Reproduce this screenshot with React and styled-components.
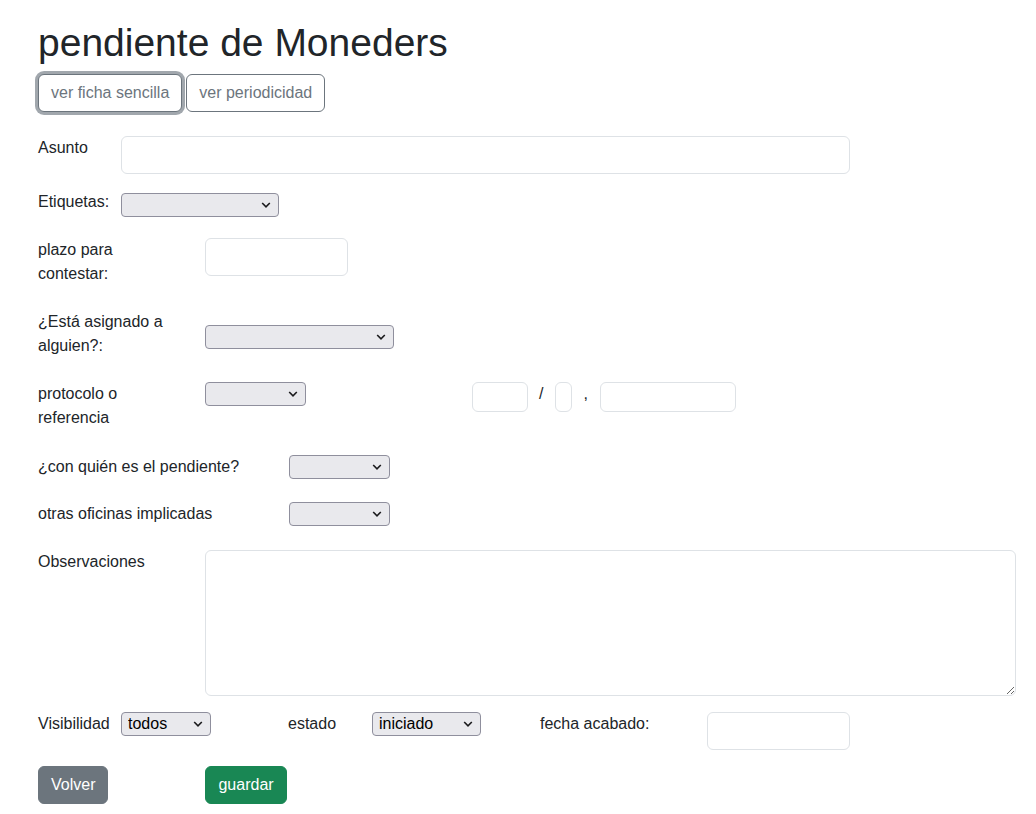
import React from 'react';
import styled, { createGlobalStyle } from 'styled-components';

const GlobalStyle = createGlobalStyle`
  * { box-sizing: border-box; }
  body {
    margin: 0;
    font-family: "Liberation Sans", Arial, sans-serif;
    font-size: 16px;
    line-height: 1.5;
    color: #212529;
    background: #fff;
  }
`;

const Page = styled.div`
  padding: 0 20px 0 38px;
`;

const Title = styled.h1`
  margin: 20px 0 7px;
  font-size: 39px;
  font-weight: 400;
  line-height: 1.2;
`;

const TabBar = styled.div`
  display: flex;
  gap: 4px;
`;

const OutlineButton = styled.button`
  font: inherit;
  height: 38px;
  padding: 6px 12px;
  color: #6c757d;
  background: #fff;
  border: 1px solid #6c757d;
  border-radius: 6px;
  box-shadow: ${(p) => (p.$focus ? '0 0 0 3px rgba(130, 138, 145, 0.75)' : 'none')};
`;

const Form = styled.form`
  padding-top: 23px;
`;

const Row = styled.div`
  display: flex;
  align-items: flex-start;
  margin-top: ${(p) => p.$top || 0}px;
`;

const Label = styled.label`
  flex: none;
  width: ${(p) => p.$w}px;
  padding: 1px 24px 0 0;
  margin-left: ${(p) => p.$ml || 0}px;
`;

const TextInput = styled.input`
  flex: none;
  font: inherit;
  width: ${(p) => p.$w}px;
  height: ${(p) => p.$h || 38}px;
  margin-top: 1px;
  margin-left: ${(p) => p.$ml || 0}px;
  border: 1px solid #dee2e6;
  border-radius: 6px;
  background: #fff;
`;

const TextArea = styled.textarea`
  flex: none;
  font: inherit;
  width: 811px;
  height: 146px;
  margin-top: 1px;
  border: 1px solid #dee2e6;
  border-radius: 6px;
  background: #fff;
`;

const SelectWrap = styled.div`
  position: relative;
  flex: none;
  width: ${(p) => p.$w}px;
  height: 24px;
  margin-top: ${(p) => (p.$mt === undefined ? 1 : p.$mt)}px;

  svg {
    position: absolute;
    right: 8px;
    top: 9px;
    pointer-events: none;
  }
`;

const NativeSelect = styled.select`
  appearance: none;
  width: 100%;
  height: 24px;
  padding: 0 20px 0 6px;
  font-family: "Liberation Sans", Arial, sans-serif;
  font-size: 16px;
  line-height: 22px;
  color: #000;
  background: #e9e9ed;
  border: 1px solid #8f8f9d;
  border-radius: 4px;
`;

const Sep = styled.span`
  flex: none;
  margin: 1px 12px 0 11px;
`;

const SolidButton = styled.button`
  font: inherit;
  height: 38px;
  padding: 6px 12px;
  color: #fff;
  background: ${(p) => p.$bg};
  border: 1px solid ${(p) => p.$bg};
  border-radius: 6px;
  margin-left: ${(p) => p.$ml || 0}px;
`;

function Select({ w, mt, value }) {
  return (
    <SelectWrap $w={w} $mt={mt}>
      <NativeSelect defaultValue={value || ''}>
        <option value={value || ''}>{value || ''}</option>
      </NativeSelect>
      <svg width="10" height="6" viewBox="0 0 10 6">
        <polyline points="1.2,1 5,4.8 8.8,1" fill="none" stroke="#1b1b1d" strokeWidth="1.6" />
      </svg>
    </SelectWrap>
  );
}

export default function App() {
  return (
    <Page>
      <GlobalStyle />
      <Title>pendiente de Moneders</Title>
      <TabBar>
        <OutlineButton $focus>ver ficha sencilla</OutlineButton>
        <OutlineButton>ver periodicidad</OutlineButton>
      </TabBar>

      <Form onSubmit={(e) => e.preventDefault()}>
        <Row>
          <Label $w={83}>Asunto</Label>
          <TextInput $w={729} />
        </Row>

        <Row $top={15}>
          <Label $w={83}>Etiquetas:</Label>
          <Select w={158} mt={4} />
        </Row>

        <Row $top={20}>
          <Label $w={167}>plazo para contestar:</Label>
          <TextInput $w={143} />
        </Row>

        <Row $top={23}>
          <Label $w={167}>¿Está asignado a alguien?:</Label>
          <Select w={189} mt={16} />
        </Row>

        <Row $top={23}>
          <Label $w={167}>protocolo o referencia</Label>
          <Select w={101} />
          <TextInput $w={56} $h={30} $ml={166} />
          <Sep>/</Sep>
          <TextInput $w={17} $h={30} />
          <Sep>,</Sep>
          <TextInput $w={136} $h={30} />
        </Row>

        <Row $top={24}>
          <Label $w={251}>¿con quién es el pendiente?</Label>
          <Select w={101} />
        </Row>

        <Row $top={22}>
          <Label $w={251}>otras oficinas implicadas</Label>
          <Select w={101} />
        </Row>

        <Row $top={23}>
          <Label $w={167}>Observaciones</Label>
          <TextArea />
        </Row>

        <Row $top={15}>
          <Label $w={83}>Visibilidad</Label>
          <Select w={90} value="todos" />
          <Label $w={84} $ml={77}>estado</Label>
          <Select w={109} value="iniciado" />
          <Label $w={167} $ml={59}>fecha acabado:</Label>
          <TextInput $w={143} />
        </Row>

        <Row $top={16}>
          <SolidButton type="button" $bg="#6c757d">Volver</SolidButton>
          <SolidButton type="submit" $bg="#198754" $ml={97}>guardar</SolidButton>
        </Row>
      </Form>
    </Page>
  );
}
